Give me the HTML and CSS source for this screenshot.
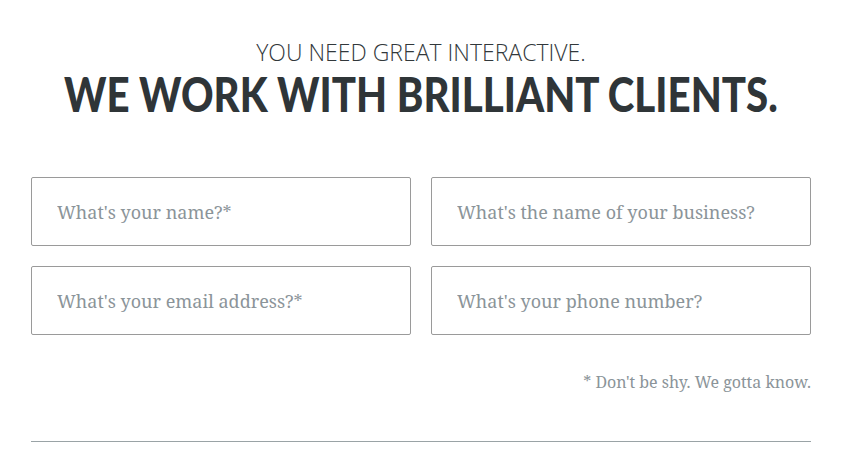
FILE: index.html
```html
<!DOCTYPE html>
<html>
<head>
<meta charset="utf-8">
<link rel="stylesheet" href="styles.css">
</head>
<body>
<section class="contact">
  <header class="intro">
    <p class="kicker">YOU NEED GREAT INTERACTIVE.</p>
    <h1 class="title"><span class="title-text">WE WORK WITH BRILLIANT CLIENTS.</span></h1>
  </header>
  <form class="form">
    <div class="grid">
      <input class="field" type="text" placeholder="What's your name?*">
      <input class="field" type="text" placeholder="What's the name of your business?">
      <input class="field" type="email" placeholder="What's your email address?*">
      <input class="field" type="tel" placeholder="What's your phone number?">
    </div>
    <p class="note">* Don't be shy. We gotta know.</p>
    <hr class="rule">
  </form>
</section>
</body>
</html>
```
FILE: styles.css
```css
html, body {
  margin: 0;
  padding: 0;
  background: #fff;
}
.contact {
  width: 780px;
  margin: 0 auto;
  padding-top: 38px;
}
.intro {
  text-align: center;
  color: #32383b;
}
.kicker {
  margin: 0;
  font-family: "Open Sans", sans-serif;
  font-weight: 300;
  font-size: 23px;
  line-height: 28px;
}
.title {
  display: flex;
  justify-content: center;
  margin: 4px 0 0;
  font-family: Lato, sans-serif;
  font-weight: 900;
  font-size: 48px;
  line-height: 48px;
  white-space: nowrap;
  color: #2f3538;
}
.title-text {
  display: inline-block;
  flex: none;
  transform: scaleX(0.838);
  transform-origin: center;
}
.form {
  margin-top: 59px;
}
.grid {
  display: grid;
  grid-template-columns: 380px 380px;
  column-gap: 20px;
  row-gap: 20px;
}
.field {
  box-sizing: border-box;
  height: 69px;
  width: 100%;
  border: 1px solid #9a9a9a;
  border-radius: 2px;
  padding: 0 25px;
  font-family: "Noto Serif", "DejaVu Serif", serif;
  font-size: 18px;
  color: #333;
  background: #fff;
  outline: none;
}
.field::placeholder {
  color: #8b9499;
}
.note {
  margin: 36px 0 0;
  text-align: right;
  font-family: "Noto Serif", "DejaVu Serif", serif;
  font-size: 16px;
  line-height: 22px;
  color: #8b9499;
}
.rule {
  margin: 48px 0 0;
  border: 0;
  border-top: 1px solid #9aa3a6;
}
```
